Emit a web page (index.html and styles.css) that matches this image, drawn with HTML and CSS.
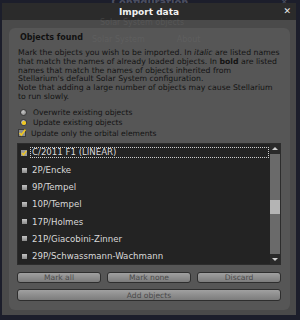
FILE: index.html
```html
<!DOCTYPE html>
<html lang="en">
<head>
    <meta charset="UTF-8">
    <meta name="viewport" content="width=device-width, initial-scale=1.0">
    <title>Import data</title>
    <link rel="stylesheet" href="styles.css">
</head>
<body>
    <!-- window behind the dialog, seen through it -->
    <div class="behind-title">Configuration</div>
    <div class="behind-close">&#x2715;</div>
    <div class="ghost ghost-tab">Solar System objects</div>
    <div class="ghost ghost-row"><span>Solar System</span><span>About</span></div>

    <div class="dialog">
        <div class="titlebar">
            <span>Import data</span>
            <span class="close">&#x2715;</span>
        </div>

        <div class="panel">
            <h2>Objects found</h2>
            <p class="info">Mark the objects you wish to be imported. In <i>italic</i> are listed names<br>that match the names of already loaded objects. In <b>bold</b> are listed<br>names that match the names of objects inherited from<br>Stellarium's default Solar System configuration.<br>Note that adding a large number of objects may cause Stellarium<br>to run slowly.</p>

            <div class="options">
                <div class="option"><span class="radio"></span>Overwrite existing objects</div>
                <div class="option"><span class="radio checked"></span>Update existing objects</div>
                <div class="option"><span class="check"><svg width="8" height="8" viewBox="0 0 8 8"><rect x="0.5" y="0.5" width="7" height="7" fill="#8e8e8e" stroke="#3a3a3a"/><path d="M1.5 4 L3.3 6 L7.5 0.5" fill="none" stroke="#f0c820" stroke-width="1.6"/></svg></span>Update only the orbital elements</div>
            </div>

            <div class="listbox">
                <div class="rows">
                    <div class="row current"><span class="box on"><svg width="6" height="6" viewBox="0 0 6 6"><rect width="6" height="6" fill="#9a9a9a"/><path d="M1 3 L2.5 4.8 L5.5 0.8" fill="none" stroke="#f0c820" stroke-width="1.4"/></svg></span><span class="name">C/2011 F1 (LINEAR)</span></div>
                    <div class="row"><span class="box"></span><span class="name">2P/Encke</span></div>
                    <div class="row"><span class="box"></span><span class="name">9P/Tempel</span></div>
                    <div class="row"><span class="box"></span><span class="name">10P/Tempel</span></div>
                    <div class="row"><span class="box"></span><span class="name">17P/Holmes</span></div>
                    <div class="row"><span class="box"></span><span class="name">21P/Giacobini-Zinner</span></div>
                    <div class="row"><span class="box"></span><span class="name">29P/Schwassmann-Wachmann</span></div>
                </div>
                <div class="scrollbar">
                    <div class="arrow up"></div>
                    <div class="track"><div class="thumb"></div></div>
                    <div class="arrow down"></div>
                </div>
            </div>

            <div class="buttons">
                <button>Mark all</button>
                <button>Mark none</button>
                <button>Discard</button>
            </div>
            <button class="wide">Add objects</button>
        </div>
    </div>
</body>
</html>
```

FILE: styles.css
```css
body {
    font-family: 'DejaVu Sans', sans-serif;
    margin: 0;
    padding: 0;
    width: 300px;
    height: 320px;
    overflow: hidden;
    background-color: #1c1e2b;
    position: relative;
}

.behind-title {
    position: absolute;
    top: -2px;
    left: 0;
    width: 300px;
    text-align: center;
    font-size: 10px;
    line-height: 10px;
    font-weight: bold;
    color: #4b4e60;
}

.behind-close {
    position: absolute;
    top: -2px;
    right: 12px;
    font-size: 9px;
    line-height: 9px;
    color: #4b4e60;
}

/* faint text of the window behind, shows through the dialog */
.ghost {
    position: absolute;
    z-index: 2;
    font-size: 8px;
    color: rgba(110, 110, 110, 0.35);
    pointer-events: none;
}

.ghost-tab {
    top: 18px;
    left: 100px;
}

.ghost-row {
    top: 35px;
    left: 92px;
    display: flex;
    gap: 32px;
}

.dialog {
    position: relative;
    margin: 3px 4px 0 2px;
    width: 294px;
    height: 312px;
    background-color: #4a4a4a;
    display: flex;
    flex-direction: column;
}

.titlebar {
    height: 17px;
    background-color: rgba(40, 40, 40, 0.92);
    color: #f2f2f2;
    font-size: 9px;
    font-weight: bold;
    display: flex;
    align-items: center;
    justify-content: center;
    position: relative;
}

.close {
    position: absolute;
    right: 5px;
    top: 3px;
    font-size: 9px;
    color: #e8e8e8;
}

.panel {
    margin: 8px 6px 5px 7px;
    height: 282px;
    background-color: #565656;
    border-radius: 6px;
    padding: 5px 9px 0 8px;
    box-sizing: border-box;
}

h2 {
    margin: 0 0 0 3px;
    font-size: 8px;
    line-height: 10px;
    color: #111;
}

.info {
    margin: 6px 0 0 1px;
    font-size: 7.75px;
    line-height: 8.8px;
    color: #141414;
    white-space: nowrap;
}

.options {
    margin-top: 5px;
}

.option {
    height: 10.5px;
    display: flex;
    align-items: center;
    font-size: 7.6px;
    color: #141414;
}

.radio {
    width: 7px;
    height: 7px;
    border-radius: 50%;
    background: radial-gradient(circle at 40% 35%, #c8c8c8, #7a7a7a);
    border: 0.5px solid #3a3a3a;
    box-sizing: border-box;
    margin: 0 6px 0 3px;
    position: relative;
}

.radio.checked::after {
    content: '';
    position: absolute;
    left: 1.2px;
    top: 1.2px;
    width: 3.6px;
    height: 3.6px;
    border-radius: 50%;
    background-color: #f0c820;
}

.check {
    display: flex;
    margin: 0 5px 0 1px;
    width: 8px;
}

.listbox {
    margin-top: 5px;
    height: 122px;
    background-color: #232323;
    display: flex;
    border: 1px solid #2c2c2c;
    box-sizing: border-box;
}

.rows {
    flex: 1;
}

.row {
    height: 17.2px;
    display: flex;
    align-items: center;
    font-size: 8.6px;
    color: #d8d8d8;
}

.box {
    width: 5px;
    height: 5px;
    margin: 0 5px 0 4px;
    background: linear-gradient(#c4c4c4, #8a8a8a);
}

.box.on {
    width: 6px;
    height: 6px;
    margin: 0 5px 0 3px;
    background: none;
    display: flex;
}

.row.current .name {
    flex: 1;
    border: 1px dotted #cfcfcf;
    padding: 0 1px;
    margin-left: -2px;
    margin-right: 1px;
    line-height: 9px;
}

.scrollbar {
    width: 10px;
    display: flex;
    flex-direction: column;
    background-color: #2a2a2a;
}

.arrow {
    height: 10px;
    position: relative;
}

.arrow::after {
    content: '';
    position: absolute;
    left: 2px;
    border-left: 3px solid transparent;
    border-right: 3px solid transparent;
}

.arrow.up::after {
    top: 3px;
    border-bottom: 3px solid #d0d0d0;
}

.arrow.down::after {
    top: 4px;
    border-top: 3px solid #d0d0d0;
}

.track {
    flex: 1;
    background-color: #6a6a6a;
    padding-top: 46px;
}

.thumb {
    height: 14px;
    background-color: #b4b4b4;
}

.buttons {
    margin-top: 7px;
    display: grid;
    grid-template-columns: 1fr 1fr 1fr;
    gap: 6px;
}

button {
    font-family: 'DejaVu Sans', sans-serif;
    height: 11px;
    padding: 0;
    font-size: 7.6px;
    line-height: 9px;
    color: #4a4a4a;
    background: linear-gradient(#a0a0a0, #7c7c7c);
    border: 1px solid #2e2e2e;
    border-radius: 3px;
}

button.wide {
    display: block;
    width: 100%;
    height: 12px;
    margin-top: 6px;
}
```
